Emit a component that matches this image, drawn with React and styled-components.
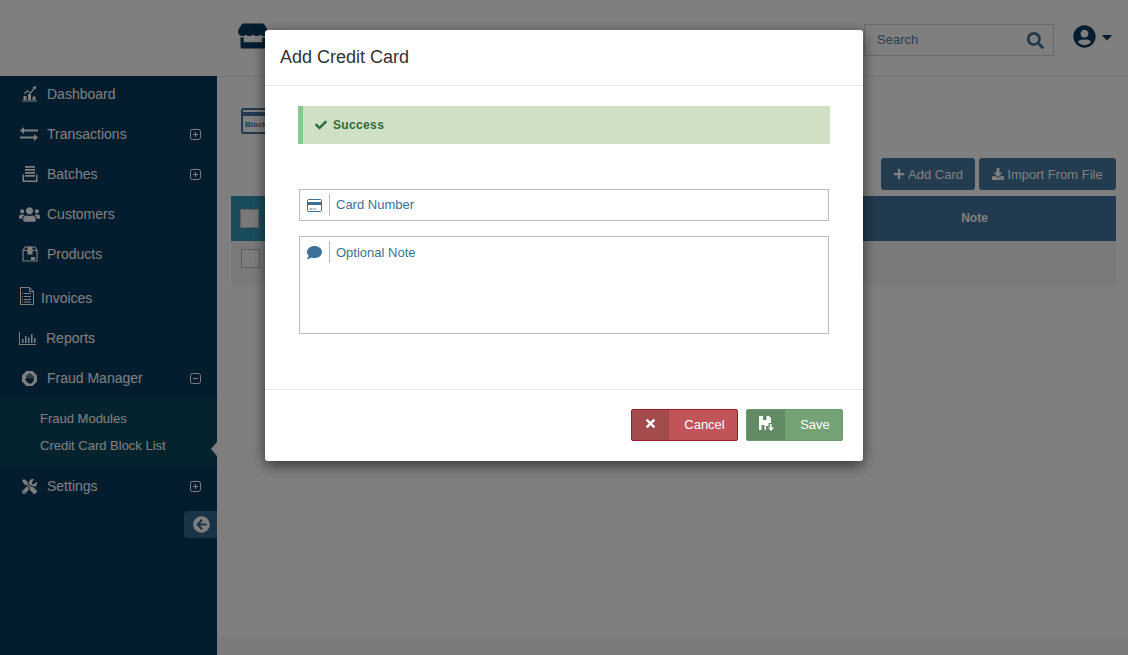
import React from "react";
import styled, { createGlobalStyle } from "styled-components";
import { FaCheck, FaTimes, FaComment, FaSearch, FaCaretDown, FaPlus, FaDownload, FaArrowCircleLeft, FaStore, FaUsers, FaTools, FaUserCircle } from "react-icons/fa";

const Global = createGlobalStyle`
  html, body { margin: 0; height: 100%; overflow: hidden; background: #fff; }
  body { font-family: "Liberation Sans", Arial, sans-serif; font-size: 14px; }
  * { box-sizing: border-box; }
`;

const Shell = styled.div`
  display: grid; grid-template-columns: 217px 1fr; height: 655px; position: relative; overflow: hidden;
`;
const Side = styled.aside`display: flex; flex-direction: column; background: #fff;`;
const LogoArea = styled.div`height: 76px; flex: none;`;
const Nav = styled.nav`flex: 1; background: #07385c; display: flex; flex-direction: column; overflow: hidden;`;
const Row = styled.div`
  display: flex; align-items: center; flex: none;
  height: ${p => p.$h || 40}px; margin-top: ${p => p.$mt || 0}px;
  padding: 0 16px ${p => p.$pb || 0}px ${p => p.$pad || 22}px; color: #fff; font-size: 14px;
`;
const Slot = styled.span`
  display: flex; align-items: center; flex: none; width: ${p => p.$w || 25}px; color: #fff; margin-top: ${p => p.$up ? -p.$up : 0}px;
`;
const Label = styled.span`flex: 1; white-space: nowrap;`;
const Sub = styled.div`
  position: relative; height: 68px; background: #08475e; display: flex; flex-direction: column;
  padding: 7px 0 0 40px; color: #fff; font-size: 13px; flex: none;
  & > div { height: 27px; display: flex; align-items: center; }
`;
const Pointer = styled.i`
  position: absolute; right: 0; top: 44px; width: 0; height: 0;
  border: 7px solid transparent; border-right: 6px solid #fff; border-left: 0;
`;
const Collapse = styled.button`
  align-self: flex-end; width: 33px; height: 27px; margin-top: 5px; border: 0; padding: 0 0 0 1px;
  background: #37678c; border-radius: 4px 0 0 4px; color: #fff; display: flex; align-items: center; justify-content: center; font-size: 17px;
`;
const Main = styled.main`display: flex; flex-direction: column; background: #fff; min-width: 0;`;
const Header = styled.header`
  height: 77px; flex: none; border-bottom: 1px solid #ececec; display: flex; align-items: flex-start;
  padding: 24px 13px 0 21px; color: #07385c;
`;
const Spacer = styled.div`flex: 1;`;
const SearchBox = styled.div`
  width: 190px; height: 32px; border: 1px solid #d4d4d4; display: flex; align-items: center; justify-content: space-between;
  padding: 0 9px 2px 12px; font-size: 13px; color: #52819f; margin-right: 19px;
  & svg { color: #3f7096; font-size: 17px; margin-top: 2px; }
`;
const UserMenu = styled.div`display: flex; align-items: center; gap: 3px; color: #07385c; margin-top: 1px; font-size: 23px;
  & svg:last-child { font-size: 16px; }
`;
const Content = styled.section`flex: 1; display: flex; flex-direction: column; padding: 31px 12px 0 14px; position: relative;`;
const PageIcon = styled.svg`width: 50px; height: 27px; display: block; margin-left: 10px;`;
const Actions = styled.div`display: flex; justify-content: flex-end; gap: 4px; margin-top: 23px;`;
const ActionButton = styled.button`
  height: 32px; border: 0; border-radius: 3px; background: #48789e; color: #fff; font: 13px "Liberation Sans", Arial, sans-serif;
  padding: 0; display: flex; align-items: center; gap: 3px; width: ${p => p.$w}px; justify-content: center; white-space: nowrap;
  & svg { font-size: 12px; }
`;
const Table = styled.div`margin-top: 6px;`;
const THead = styled.div`display: flex; height: 45px; background: #42749e; color: #fff; font-weight: 700; font-size: 12px; align-items: center;`;
const CheckCell = styled.div`width: 60px; height: 100%; background: #349ab8; display: flex; align-items: center; padding-left: 9px;`;
const NoteHead = styled.div`margin-left: auto; width: 283px; text-align: center; padding-bottom: 2px;`;
const TRow = styled.div`height: 45px; background: #f5f5f5; display: flex; align-items: flex-start; padding: 8px 0 0 10px;`;
const Box = styled.span`display: block; width: 19px; height: 19px; border: 1px solid #bbb; background: ${p => p.$fill ? "#f2f2f2" : "#fafafa"};`;
const Footer = styled.div`height: 18px; flex: none; background: #f6f6f6;`;

const Backdrop = styled.div`
  position: absolute; inset: 0; background: rgba(0,0,0,.5); display: flex; justify-content: center; align-items: flex-start; padding-top: 30px;
`;
const Modal = styled.div`
  width: 598px; height: 431px; background: #fff; border-radius: 3px; box-shadow: 0 4px 14px rgba(0,0,0,.6); display: flex; flex-direction: column;
`;
const ModalHead = styled.div`
  height: 56px; flex: none; border-bottom: 1px solid #e5e5e5; padding: 0 15px; display: flex; align-items: center;
  font-size: 18px; color: #333;
`;
const ModalBody = styled.div`flex: 1; padding: 20px 33px 0; display: flex; flex-direction: column;`;
const Alert = styled.div`
  height: 38px; background: #cfe0c5; border-left: 5px solid #8cc68f; color: #2f6b3a; font-weight: 700; font-size: 12px; letter-spacing: .35px;
  display: flex; align-items: center; gap: 6px; padding-left: 12px;
  & svg { font-size: 12px; }
`;
const Field = styled.div`
  margin: ${p => p.$mt}px 1px 0; height: ${p => p.$h}px; border: 1px solid #bbb; display: flex; align-items: flex-start; padding-top: 4px;
`;
const FieldIcon = styled.span`
  width: 30px; height: 22px; border-right: 1px solid #bbb; flex: none; display: flex; align-items: center; padding-left: 7px; color: #3e7199;
`;
const inputCss = `
  flex: 1; border: 0; outline: 0; background: transparent; padding: 0 0 2px 6px; height: 22px; font: 13px "Liberation Sans", Arial, sans-serif; color: #3e7199; resize: none;
  &::placeholder { color: #3e7199; opacity: 1; }
`;
const Input = styled.input`${inputCss}`;
const Area = styled.textarea`${inputCss} height: 88px; padding-top: 4px;`;
const ModalFoot = styled.div`
  height: 72px; flex: none; border-top: 1px solid #e5e5e5; display: flex; justify-content: flex-end; align-items: center; gap: 8px; padding: 0 20px 2px 0;
`;
const SplitButton = styled.button`
  height: 32px; width: ${p => p.$w}px; padding: 0; border: 1px solid ${p => p.$border}; border-radius: 2px; background: ${p => p.$bg};
  color: #fff; font: 13px "Liberation Sans", Arial, sans-serif; display: flex; align-items: stretch; overflow: hidden;
`;
const SplitIcon = styled.span`
  width: ${p => p.$w}px; background: ${p => p.$bg}; display: flex; align-items: center; justify-content: center; flex: none; padding-bottom: 3px; font-size: 13px;
`;
const SplitText = styled.span`flex: 1; display: flex; align-items: center; justify-content: center; padding-left: 3px;`;

const Dash = () => <svg width="15" height="16" viewBox="0 0 15 16" fill="#fff"><path d="M0 14.600h15v1H0zM1.500 10h3v4h-3zM6 8h3v6H6zM10.500 10.500h3V14h-3z"/><path d="M2 7l3.600-3 2.700 2.400L11.500 2l-1.200-.8L14 0l-.3 3.600-1-.8-4.100 5.300L5.600 5.400 2.800 8z"/></svg>;
const Swap = () => <svg width="18" height="14" viewBox="0 0 18 14" fill="#fff"><path d="M4 0v2.500h14v2H4V7L0 3.500zM14 7v2.500H0v2h14V14l4-3.500z"/></svg>;
const Stack = () => <svg width="16" height="16" viewBox="0 0 16 16" fill="#fff"><path d="M3 0h10v1.700H3zM3 3h10v1.700H3zM3 6h10v1.700H3zM3 9h10v1.700H3zM.5 8.500H2V14.500h12V8.500h1.500V16H.5z"/></svg>;
const Box3d = () => <svg width="16" height="16" viewBox="0 0 16 16" fill="none" stroke="#fff" strokeWidth="1.200"><path d="M1 4.500 3 1h10l2 3.500V15H1zM1 4.500h14"/><path d="M6 1h4v7H6z" fill="#fff"/><path d="M9 11h4v3H9z" fill="#fff" stroke="none"/></svg>;
const Doc = () => <svg width="14" height="18" viewBox="0 0 14 18" fill="none" stroke="#fff" strokeWidth="1"><path d="M.5.500h9l4 4v13H.500zM9.500.500v4h4"/><path d="M4 6.500h7M4 9.500h7M4 12.500h7M4 15h7M2 6.500h1M2 9.500h1M2 12.500h1M2 15h1"/></svg>;
const Bars = () => <svg width="17" height="13" viewBox="0 0 17 13" fill="#fff"><path d="M0 0h1v12h16v1H0zM3 7h1.500v4H3zM6 4h1.500v7H6zM9 5.500h1.500V11H9zM12 2h1.500v9H12zM15 6h1.500v5H15z"/></svg>;
const Fraud = () => (
  <svg width="15" height="15" viewBox="0 0 15 15">
    <path fill="#fff" d="M4.400 0h6.200L15 4.400v6.200L10.600 15H4.400L0 10.600V4.400z"/>
    <path fill="none" stroke="#07385c" strokeWidth="1.300" strokeLinecap="round" d="M5 4.500V8M7 3v5M9 3.500V8M11 5v4"/>
    <path fill="#07385c" d="M4.500 7.500h7V10l-2 2.500H6.500L3 8.500l.8-.8z"/>
  </svg>
);
const PlusBox = ({ minus }) => <svg width="11" height="11" viewBox="0 0 11 11" fill="none" stroke="#fff" strokeWidth="1"><rect x=".5" y=".5" width="10" height="10" rx="2"/><path d={minus ? "M3 5.500h5" : "M3 5.500h5M5.500 3v5"}/></svg>;
const Card = () => <svg width="15" height="13" viewBox="0 0 15 13"><rect x=".5" y=".5" width="14" height="12" rx="1" fill="none" stroke="#3e7199"/><path fill="#3e7199" d="M0 3h15v3H0zM2.500 9.500h3v1h-3zM6.500 9.500h2v1h-2z"/></svg>;
const Floppy = () => <svg width="15" height="15" viewBox="0 0 15 15" fill="#fff"><path fillRule="evenodd" d="M0 0h10l2 2v5H9.500v3H7v4H0zM4 0v4h3.500V0zM2.500 9v5h3V9z"/><path d="M11 8h1.500v3.500H15l-3 3.500-3-3.500h2z"/></svg>;

const items = [
  { t: "Dashboard", i: <Dash />, h: 38, pb: 2 },
  { t: "Transactions", i: <Swap />, plus: 1, pad: 20, w: 27 },
  { t: "Batches", i: <Stack />, plus: 1 },
  { t: "Customers", i: <FaUsers size={21} />, pad: 19, w: 28 },
  { t: "Products", i: <Box3d /> },
  { t: "Invoices", i: <Doc />, pad: 20, w: 21, mt: 4, up: 4 },
  { t: "Reports", i: <Bars />, pad: 19, w: 27 },
  { t: "Fraud Manager", i: <Fraud />, minus: 1 },
];

export default function App() {
  return (
    <Shell>
      <Global />
      <Side>
        <LogoArea />
        <Nav>
          {items.map(it => (
            <Row key={it.t} $h={it.h} $mt={it.mt} $pad={it.pad} $pb={it.pb}>
              <Slot $w={it.w} $up={it.up}>{it.i}</Slot>
              <Label>{it.t}</Label>
              {it.plus && <PlusBox />}
              {it.minus && <PlusBox minus />}
            </Row>
          ))}
          <Sub>
            <div>Fraud Modules</div>
            <div>Credit Card Block List</div>
            <Pointer />
          </Sub>
          <Row>
            <Slot><FaTools size={15} /></Slot>
            <Label>Settings</Label>
            <PlusBox />
          </Row>
          <Collapse aria-label="Collapse"><FaArrowCircleLeft /></Collapse>
        </Nav>
      </Side>
      <Main>
        <Header>
          <FaStore size={30} style={{ marginTop: -3 }} />
          <Spacer />
          <SearchBox>Search<FaSearch /></SearchBox>
          <UserMenu><FaUserCircle /><FaCaretDown /></UserMenu>
        </Header>
        <Content>
          <PageIcon viewBox="0 0 50 27">
            <rect x="1" y="1" width="48" height="24" rx="2" fill="#fff" stroke="#42749e" strokeWidth="2" />
            <rect x="1" y="4" width="48" height="4" fill="#42749e" />
            <text x="4" y="19" fontSize="8" fontWeight="700" fontFamily="Liberation Sans" fill="#42749e">Blocked</text>
          </PageIcon>
          <Actions>
            <ActionButton $w={94}><FaPlus />Add Card</ActionButton>
            <ActionButton $w={137}><FaDownload />Import From File</ActionButton>
          </Actions>
          <Table>
            <THead><CheckCell><Box $fill /></CheckCell><NoteHead>Note</NoteHead></THead>
            <TRow><Box /></TRow>
          </Table>
        </Content>
        <Footer />
      </Main>
      <Backdrop>
        <Modal>
          <ModalHead>Add Credit Card</ModalHead>
          <ModalBody>
            <Alert><FaCheck />Success</Alert>
            <Field $mt={45} $h={32}>
              <FieldIcon><Card /></FieldIcon>
              <Input placeholder="Card Number" />
            </Field>
            <Field $mt={15} $h={98}>
              <FieldIcon><FaComment size={15} /></FieldIcon>
              <Area placeholder="Optional Note" />
            </Field>
          </ModalBody>
          <ModalFoot>
            <SplitButton $w={107} $bg="#c05458" $border="#a3162b">
              <SplitIcon $w={37} $bg="#a44b4e"><FaTimes /></SplitIcon>
              <SplitText>Cancel</SplitText>
            </SplitButton>
            <SplitButton $w={97} $bg="#74a276" $border="#6e9a71">
              <SplitIcon $w={38} $bg="#628a64"><Floppy /></SplitIcon>
              <SplitText>Save</SplitText>
            </SplitButton>
          </ModalFoot>
        </Modal>
      </Backdrop>
    </Shell>
  );
}
